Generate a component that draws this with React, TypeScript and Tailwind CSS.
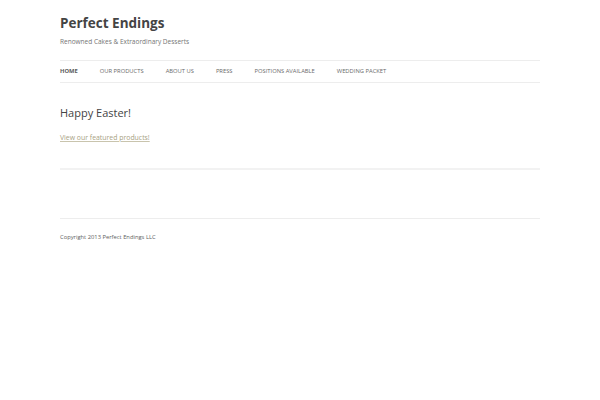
export default function App() {
  const navItems = [
    "Home",
    "Our Products",
    "About Us",
    "Press",
    "Positions Available",
    "Wedding Packet",
  ];

  return (
    <div
      className="min-h-[400px] w-full bg-white"
      style={{ fontFamily: '"Open Sans", "Liberation Sans", sans-serif' }}
    >
      <div className="mx-auto w-[480px] pt-[13px]">
        {/* Header */}
        <header>
          <h1 className="text-[13.5px] font-bold leading-[20px] text-[#444444]">
            Perfect Endings
          </h1>
          <h2 className="mt-[4px] text-[6.5px] leading-[10px] text-[#757575]">
            Renowned Cakes &amp; Extraordinary Desserts
          </h2>
          <nav className="mt-[13px] flex h-[23px] items-center gap-[22px] border-y border-[#ededed]">
            {navItems.map((item, i) => (
              <span
                key={item}
                className={`text-[5.8px] uppercase leading-none ${
                  i === 0 ? "font-bold text-[#5a5a5a]" : "text-[#6a6a6a]"
                }`}
              >
                {item}
              </span>
            ))}
          </nav>
        </header>

        {/* Content */}
        <main className="pt-[22px]">
          <h3 className="text-[11px] leading-[16px] text-[#444444]">
            Happy Easter!
          </h3>
          <a className="mt-[11px] block text-[6.9px] leading-[12px] text-[#a8a284] underline decoration-[#c9c4ad]">
            View our featured products!
          </a>
          <div className="mt-[24px] h-[2px] bg-[#f2f2f2]" />
        </main>

        {/* Footer */}
        <footer className="mt-[48px] border-t border-[#ededed] pt-[13px]">
          <p className="text-[5.8px] leading-[10px] text-[#5e5e5e]">
            Copyright 2013 Perfect Endings LLC
          </p>
        </footer>
      </div>
    </div>
  );
}
